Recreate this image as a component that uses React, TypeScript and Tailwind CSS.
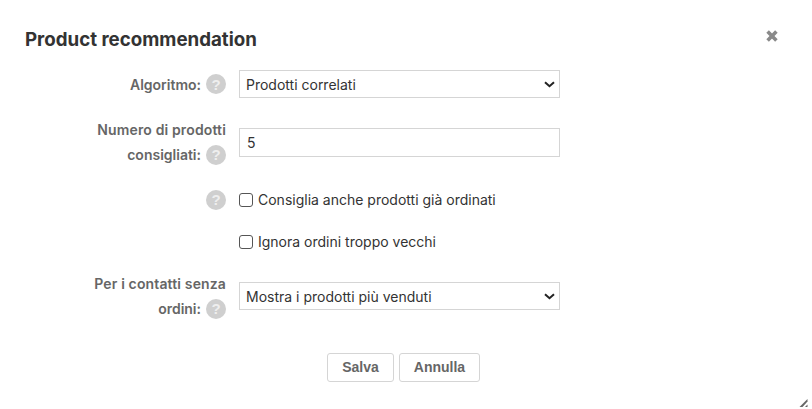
function HelpIcon() {
  return (
    <span className="inline-flex h-[20px] w-[20px] shrink-0 items-center justify-center rounded-full bg-[#cfcfcf] font-['Liberation_Sans',sans-serif] text-[15px] font-bold leading-none text-[#eeeeee]">
      ?
    </span>
  );
}

function Chevron() {
  return (
    <svg className="pointer-events-none absolute right-[5px] top-[11px]" width="11" height="7" viewBox="0 0 11 7" fill="none">
      <path d="M1 1.2 5.5 5.2 10 1.2" stroke="#222" strokeWidth="2" />
    </svg>
  );
}

function Select({ value }: { value: string }) {
  return (
    <div className="relative w-[321px]">
      <select
        defaultValue={value}
        className="block h-[28px] w-full appearance-none rounded-none border border-[#d5d5d5] bg-white pl-[6px] text-[14px] text-[#333] outline-none"
      >
        <option>{value}</option>
      </select>
      <Chevron />
    </div>
  );
}

function Label({ lines }: { lines: string[] }) {
  return (
    <div className="w-[201px] shrink-0 text-right text-[14px] font-semibold leading-[25px] text-[#666]">
      {lines.map((line, i) =>
        i === lines.length - 1 ? (
          <div key={line} className="flex items-center justify-end gap-[5px]">
            <span>{line}</span>
            <HelpIcon />
          </div>
        ) : (
          <div key={line} className="tracking-[0.01em]">
            {line}
          </div>
        )
      )}
    </div>
  );
}

function Check({ text }: { text: string }) {
  return (
    <label className="flex items-center gap-[5px] text-[14px] text-[#333]">
      <span className="h-[14px] w-[14px] rounded-[3px] border border-[#555] bg-white" />
      {text}
    </label>
  );
}

export default function App() {
  return (
    <div className="relative h-[409px] w-[812px] overflow-hidden bg-white pl-[25px] pr-[34px] font-['Inter',sans-serif]">
      <div className="flex items-center justify-between pt-[29px]">
        <h1 className="text-[18.72px] font-bold leading-[22px] text-[#333]">Product recommendation</h1>
        <svg className="-mt-[8px]" width="12" height="12" viewBox="0 0 12 12" fill="none">
          <path d="M1.6 1.6 10.4 10.4M10.4 1.6 1.6 10.4" stroke="#8a8a8a" strokeWidth="3.6" />
        </svg>
      </div>

      <div className="mt-[19px] flex items-center gap-[13px]">
        <Label lines={["Algoritmo:"]} />
        <Select value="Prodotti correlati" />
      </div>

      <div className="mt-[19px] flex items-center gap-[13px]">
        <Label lines={["Numero di prodotti", "consigliati:"]} />
        <input
          defaultValue="5"
          className="h-[29px] w-[321px] border border-[#d5d5d5] bg-white pl-[7px] text-[14px] text-[#333] outline-none"
        />
      </div>

      <div className="mt-[22px] flex items-center gap-[13px]">
        <div className="flex w-[201px] justify-end">
          <HelpIcon />
        </div>
        <Check text="Consiglia anche prodotti già ordinati" />
      </div>

      <div className="mt-[21px] flex items-center gap-[13px] pl-[214px]">
        <Check text="Ignora ordini troppo vecchi" />
      </div>

      <div className="mt-[19px] flex items-center gap-[13px]">
        <Label lines={["Per i contatti senza", "ordini:"]} />
        <Select value="Mostra i prodotti più venduti" />
      </div>

      <div className="mt-[32px] flex justify-center gap-[5px] pl-[4px] font-['Liberation_Sans',sans-serif] text-[14px] font-bold text-[#666]">
        <button className="h-[29px] w-[67px] rounded-[3px] border border-[#d5d5d5] bg-white">Salva</button>
        <button className="h-[29px] w-[81px] rounded-[3px] border border-[#d5d5d5] bg-white">Annulla</button>
      </div>

      <svg className="absolute bottom-[2px] right-[4px]" width="9" height="9" viewBox="0 0 9 9" fill="none">
        <path d="M0.5 9 8.5 1V3.5L3.5 9Z" fill="#666" />
        <path d="M6 9 8.5 6.5V9Z" fill="#666" />
      </svg>
    </div>
  );
}
